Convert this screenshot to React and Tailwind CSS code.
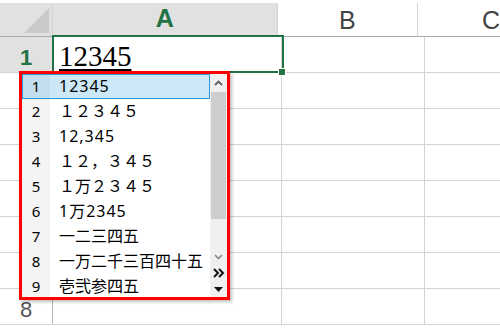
import React from "react";

const candidates = [
  "12345",
  "１２３４５",
  "12,345",
  "１２，３４５",
  "１万２３４５",
  "1万2345",
  "一二三四五",
  "一万二千三百四十五",
  "壱弐参四五",
];

const jp = { fontFamily: '"Noto Sans", "Noto Sans CJK JP", sans-serif' };
const arial = { fontFamily: '"Liberation Sans", Arial, sans-serif' };

function ColumnHeaders() {
  return (
    <div className="flex h-[34px]" style={arial}>
      <div className="w-[53px] h-[34px] bg-[#e1e1e1] border-b border-[#ababab] border-r border-r-[#d4d4d4] flex justify-end">
        <svg width="52" height="33" viewBox="0 0 52 33">
          <polygon points="49,5 49,30 24,30" fill="#c9c9c9" />
        </svg>
      </div>
      <div className="w-[229px] bg-[#e1e1e1] border-r border-[#d4d4d4] border-b-2 border-b-[#217346] flex items-center justify-center text-[25px] font-bold text-[#217346] leading-none pb-[2px]">
        A
      </div>
      <div className="w-[143px] bg-white border-r border-[#d4d4d4] border-b border-b-[#ababab] flex items-center justify-center text-[25px] text-[#444] leading-none pt-[1px]">
        B
      </div>
      <div className="flex-1 bg-white border-b border-[#ababab] flex items-center text-[25px] text-[#444] leading-none pl-[64px] pt-[1px]">
        C
      </div>
    </div>
  );
}

function Row({ n, selected, children }) {
  return (
    <div className="flex h-[36px] border-b border-[#d4d4d4]">
      <div
        className={`w-[53px] border-r border-[#bcbcbc] flex justify-center pt-[10px] text-[22px] leading-none ${
          selected ? "bg-[#e1e1e1] text-[#217346] font-bold" : "bg-white text-[#555]"
        }`}
        style={arial}
      >
        {n}
      </div>
      <div className="w-[229px] border-r border-[#d4d4d4]">{children}</div>
      <div className="w-[143px] border-r border-[#d4d4d4]" />
      <div className="flex-1" />
    </div>
  );
}

function Candidate({ n, text, active }) {
  // half-width digits are a bit wider in the original font
  const narrow = /[0-9]/.test(text);
  return (
    <div
      className={`flex h-[25px] shrink-0 ${
        active ? "bg-[#cce8f7] outline outline-1 outline-[#2a9ad8] -outline-offset-1" : ""
      }`}
    >
      <div
        className={`w-[28px] flex justify-center text-[15px] leading-[25px] text-black ${
          active ? "bg-[#c2deef]" : "bg-[#f4f4f4]"
        }`}
        style={jp}
      >
        {n}
      </div>
      <div
        className={`pl-[9px] text-[16px] leading-[25px] text-black whitespace-nowrap ${
          narrow ? "tracking-[1px]" : ""
        }`}
        style={jp}
      >
        {text}
      </div>
    </div>
  );
}

function Scrollbar() {
  return (
    <div className="w-[17px] bg-[#f0f0f0] flex flex-col">
      <div className="h-[18px] flex items-center justify-center">
        <svg width="9" height="6" viewBox="0 0 9 6">
          <polyline points="1,5 4.5,1.5 8,5" fill="none" stroke="#5f5f5f" strokeWidth="1.8" />
        </svg>
      </div>
      <div className="h-[127px] mx-[1px] bg-[#cdcdcd]" />
      <div className="h-[31px]" />
      <div className="h-[14px] flex items-center justify-center">
        <svg width="9" height="6" viewBox="0 0 9 6">
          <polyline points="1,1 4.5,4.5 8,1" fill="none" stroke="#8a8a8a" strokeWidth="1.6" />
        </svg>
      </div>
      <div className="h-[18px] flex items-center justify-center">
        <svg width="12" height="10" viewBox="0 0 12 10">
          <polyline points="1,1 5,5 1,9" fill="none" stroke="#111" strokeWidth="2" />
          <polyline points="6,1 10,5 6,9" fill="none" stroke="#111" strokeWidth="2" />
        </svg>
      </div>
      <div className="h-[15px] flex items-center justify-center">
        <svg width="9" height="5" viewBox="0 0 9 5">
          <polygon points="0,0 9,0 4.5,5" fill="#111" />
        </svg>
      </div>
    </div>
  );
}

export default function App() {
  return (
    <div className="relative w-[500px] h-[330px] bg-white overflow-hidden pt-[3px]">
      <ColumnHeaders />
      <Row n="1" selected>
        <div
          className="pl-[6px] pt-[5px] text-[29px] leading-none text-black underline decoration-2 underline-offset-[3px]"
          style={{ fontFamily: '"Liberation Serif", "Times New Roman", serif' }}
        >
          12345
        </div>
      </Row>
      {["2", "3", "4", "5", "6", "7", "8"].map((n) => (
        <Row key={n} n={n} />
      ))}

      {/* selected cell frame */}
      <div className="absolute left-[52px] top-[35px] w-[232px] h-[38px] border-2 border-[#217346] pointer-events-none" />
      <div className="absolute left-[279px] top-[69px] w-[6px] h-[6px] bg-[#217346] outline outline-1 outline-white" />

      {/* IME candidate list */}
      <div className="absolute left-[19px] top-[71px] w-[211px] h-[229px] border-[3px] border-[#ff0000] bg-white flex shadow-[2px_2px_3px_rgba(0,0,0,0.25)]">
        <div className="flex-1 flex flex-col overflow-hidden">
          {candidates.map((t, i) => (
            <Candidate key={i} n={i + 1} text={t} active={i === 0} />
          ))}
        </div>
        <Scrollbar />
      </div>
    </div>
  );
}
